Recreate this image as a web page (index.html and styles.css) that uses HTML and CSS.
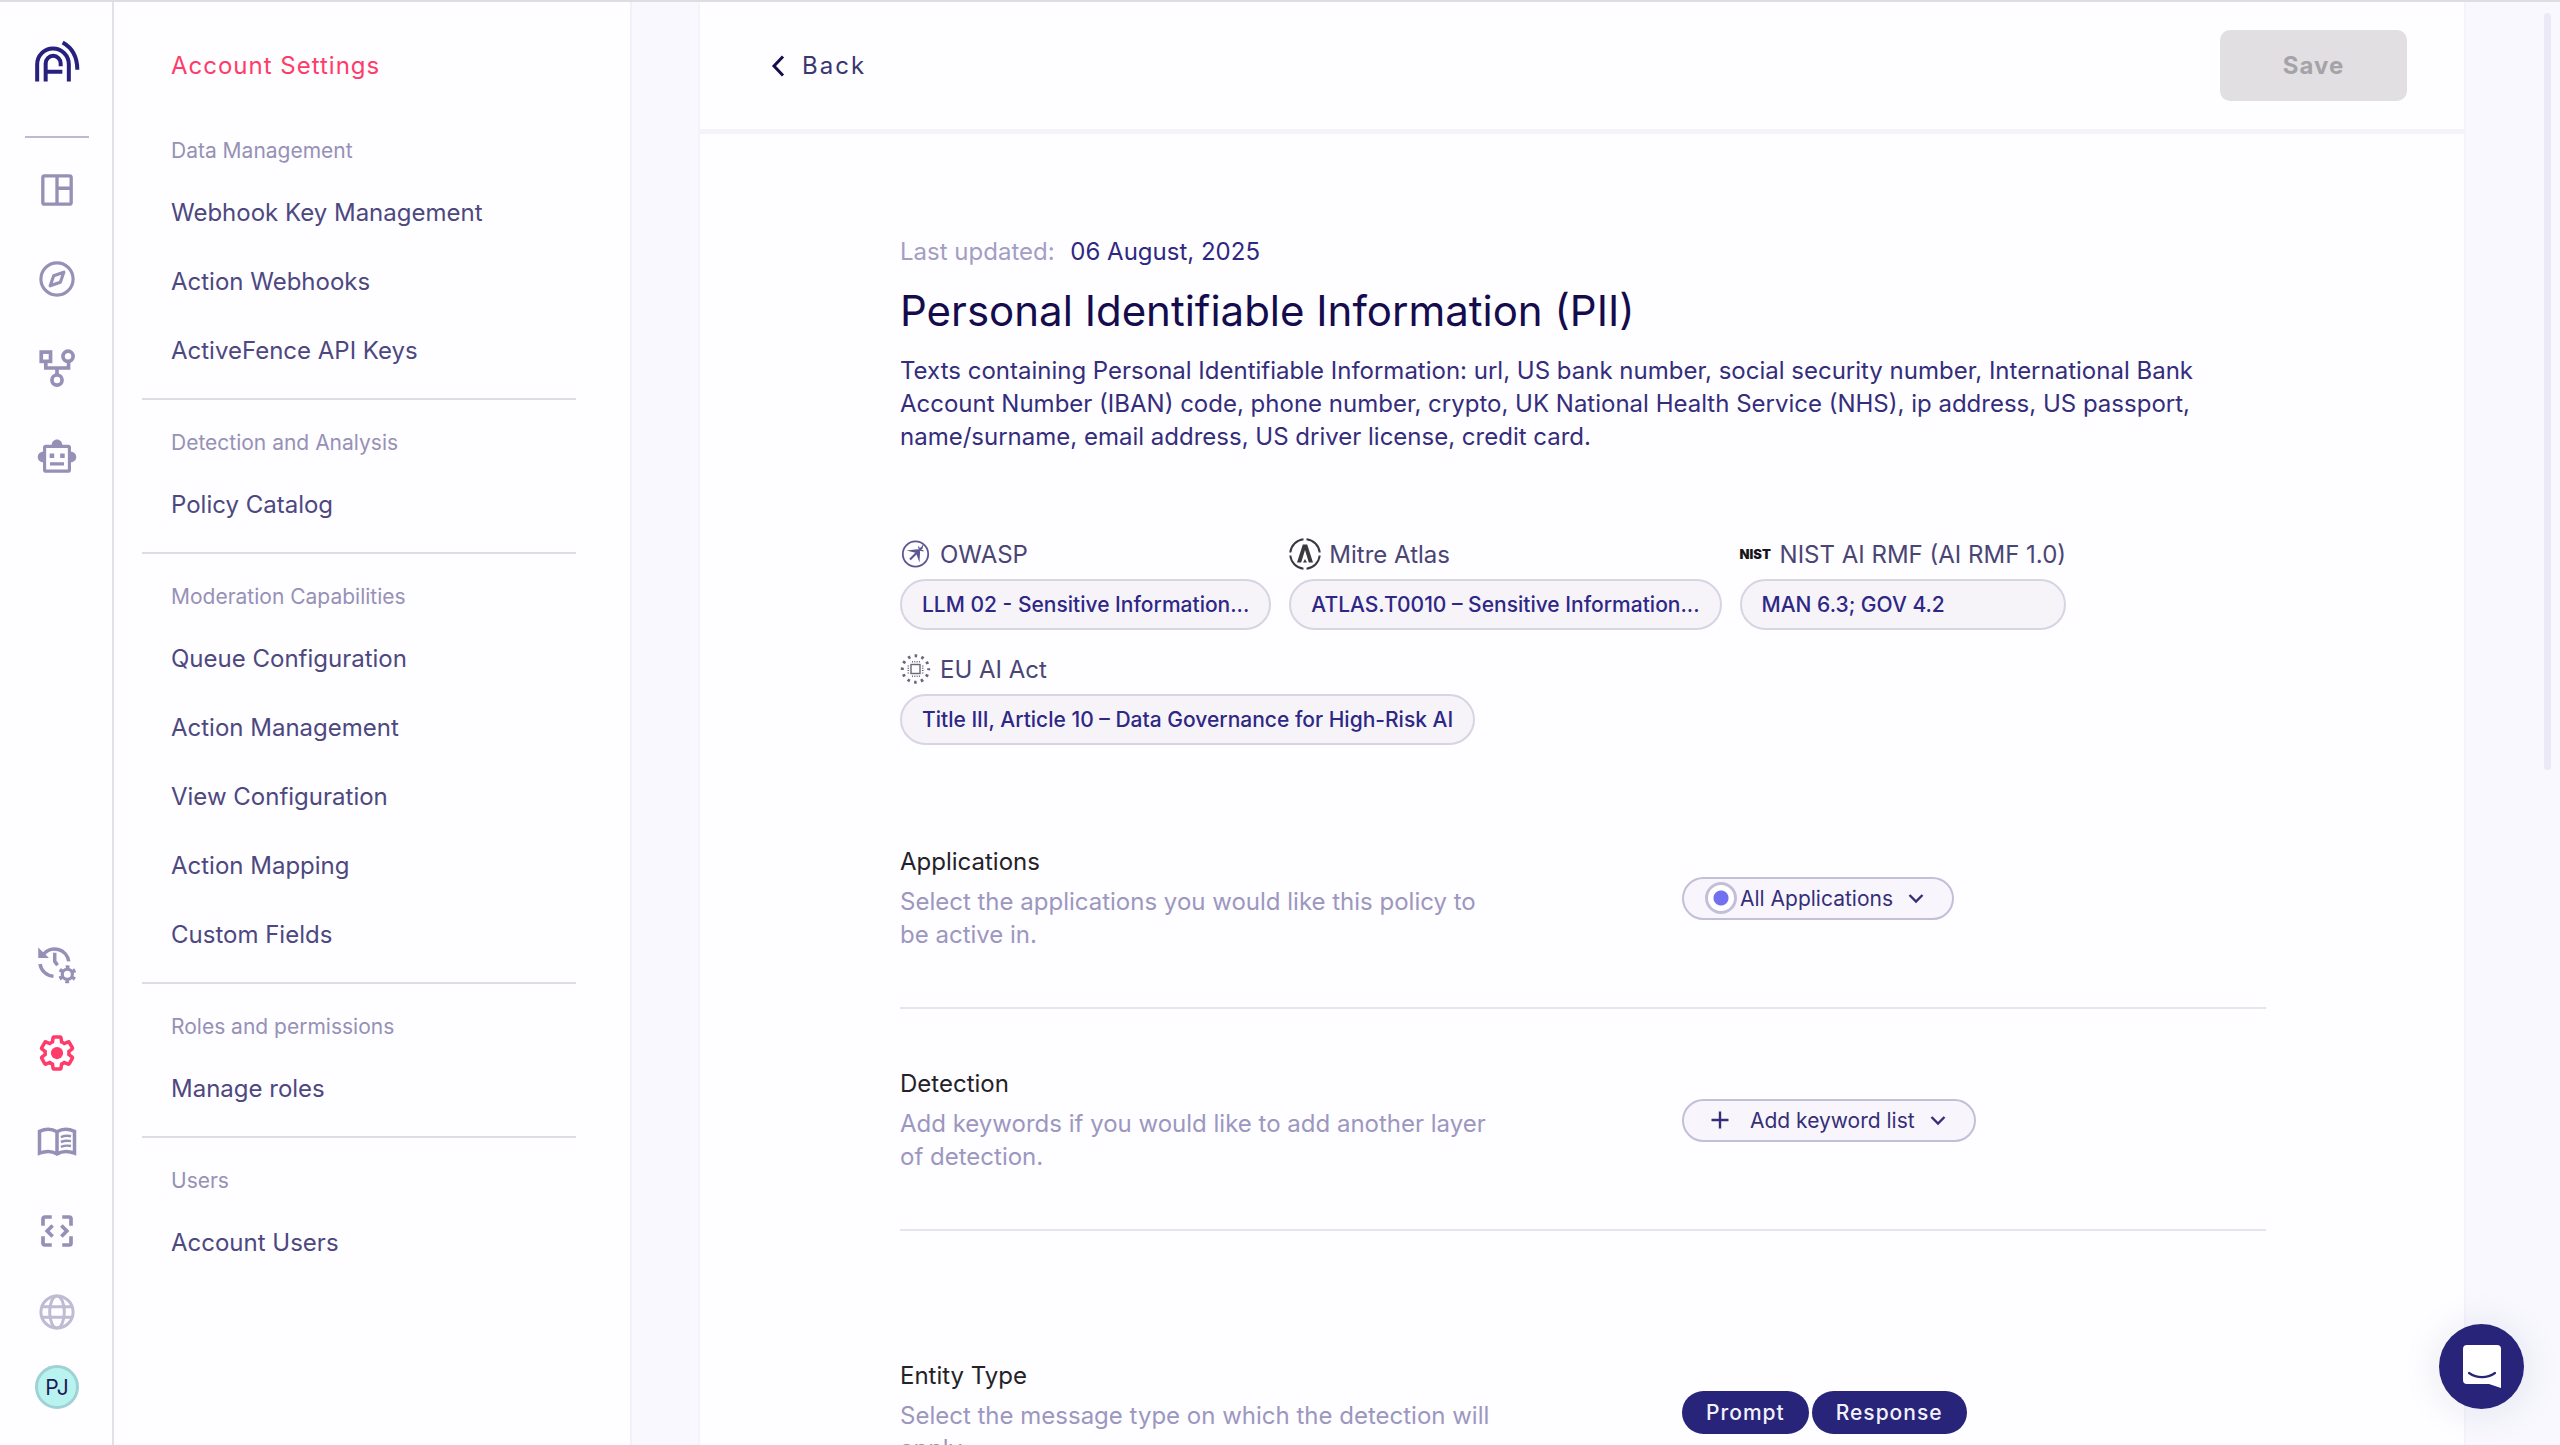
FILE: index.html
```html
<!DOCTYPE html>
<html lang="en">
  <head>
    <meta charset="UTF-8" />
    <title>Account Settings</title>
    <link rel="stylesheet" href="styles.css">
  </head>
  <body>
    <div class="app">
      <!-- icon rail -->
      <nav class="rail" aria-label="Main">
        <a href="#" class="logo" aria-label="Home">
          <svg viewBox="44 61 135 125" fill="none" stroke="currentColor" stroke-width="12">
            <path d="M50.500 185V134a47.500 48 0 0 1 95 0v51" />
            <path d="M76 185v-54a22.500 23 0 0 1 45 0v8M76 156h50" />
            <path d="M127 68c29 16 44 44 44 82" />
          </svg>
        </a>
        <div class="rail-line"></div>

        <div class="rail-group">
          <a href="#" class="rail-link" aria-label="Dashboard">
            <svg viewBox="0 0 24 24" fill="none" stroke="currentColor" stroke-width="1.900">
              <rect x="3.900" y="3.900" width="16.200" height="16.200" rx="1" />
              <path d="M12 4v16M12 11h8" />
            </svg>
          </a>
          <a href="#" class="rail-link" aria-label="Explore">
            <svg viewBox="0 0 24 24" fill="none" stroke="currentColor" stroke-width="1.800">
              <circle cx="12" cy="12" r="9.200" />
              <path d="M8.100 15.900l2-5.700 5.800-2.100-2 5.700z" stroke-linejoin="round" />
            </svg>
          </a>
          <a href="#" class="rail-link" aria-label="Workflows">
            <svg viewBox="0 0 24 24" fill="none" stroke="currentColor" stroke-width="2.100">
              <rect x="3" y="2.900" width="5.300" height="5.300" />
              <circle cx="18.300" cy="5.300" r="2.900" />
              <circle cx="12" cy="18.900" r="2.900" />
              <path d="M5.600 8.200V12h13V8.200M12 12v4" />
            </svg>
          </a>
          <a href="#" class="rail-link" aria-label="Agents">
            <svg viewBox="0 0 24 24" fill="currentColor">
              <path d="M20 9V6.500c0-.8-.7-1.500-1.500-1.500H15c0-1.660-1.340-3-3-3S9 3.340 9 5H5.500C4.700 5 4 5.700 4 6.500V9c-1.660 0-3 1.340-3 3s1.340 3 3 3v4.500c0 .8.7 1.500 1.500 1.500h13c.8 0 1.500-.7 1.500-1.500V15c1.660 0 3-1.340 3-3s-1.340-3-3-3zm-1.800 10.200H5.800V6.800h12.400v12.400zM7.800 10h2.600v2.600H7.800zM13.800 10h2.600v2.600h-2.600zM8 15h8v1.800H8z" />
            </svg>
          </a>
        </div>

        <div class="rail-group rail-group-bottom">
          <a href="#" class="rail-link" aria-label="History settings">
            <svg viewBox="0 0 24 24" fill="none" stroke="currentColor" stroke-width="2">
              <path d="M4.200 6.500A8.200 8.200 0 0 1 18.700 10.500M2.300 12a8.200 8.200 0 0 0 7.700 7" />
              <path d="M1.300 2.500v6.100h6.100z" fill="currentColor" stroke="none" />
              <path d="M10.700 5.500v5l1.600 2.200" />
              <circle cx="17.900" cy="17.900" r="2.900" stroke-width="1.800" />
              <circle cx="17.900" cy="17.900" r="4.300" stroke-width="1.700" stroke-dasharray="2.100 2.400" stroke-dashoffset="1" transform="rotate(30 17.900 17.900)" />
            </svg>
          </a>
          <a href="#" class="rail-link active" aria-label="Settings">
            <svg viewBox="0 0 24 24" fill="none" stroke="currentColor" stroke-width="2.200">
              <path transform="translate(1.100 1.100) scale(.91)" d="M19.430 12.980c.04-.32.07-.64.07-.98s-.03-.66-.07-.98l2.110-1.650c.19-.15.24-.42.12-.64l-2-3.460c-.12-.22-.39-.3-.61-.22l-2.490 1c-.52-.4-1.080-.73-1.690-.98l-.38-2.650C14.460 2.180 14.250 2 14 2h-4c-.25 0-.46.18-.49.42l-.38 2.650c-.61.25-1.170.59-1.690.98l-2.490-1c-.23-.09-.49 0-.61.22l-2 3.460c-.13.22-.07.49.12.64l2.110 1.650c-.04.32-.07.65-.07.98s.03.66.07.98l-2.110 1.650c-.19.15-.24.42-.12.64l2 3.460c.12.22.39.3.61.22l2.490-1c.52.4 1.080.73 1.690.98l.38 2.650c.03.24.24.42.49.42h4c.25 0 .46-.18.49-.42l.38-2.650c.61-.25 1.170-.59 1.690-.98l2.490 1c.23.09.49 0 .61-.22l2-3.460c.12-.22.07-.49-.12-.64z" />
              <circle cx="12" cy="12" r="3.500" fill="currentColor" stroke="none" />
            </svg>
          </a>
          <a href="#" class="rail-link" aria-label="Documentation">
            <svg viewBox="0 0 24 24" fill="none" stroke="currentColor" stroke-width="2">
              <path d="M12 18.800c-3-1.700-6.500-1.700-10-.4V5.900c3.500-1.600 7-1.600 10 .2 3-1.800 6.500-1.800 10-.2v12.500c-3.500-1.300-7-1.300-10 .4zM12 6v12.500" />
              <path d="M14.200 9.200c2-.8 3.800-.9 5.800-.5M14.200 12c2-.8 3.800-.9 5.800-.5M14.200 14.800c2-.8 3.800-.9 5.800-.5" stroke-width="1.400" />
            </svg>
          </a>
          <a href="#" class="rail-link" aria-label="Developers">
            <svg viewBox="0 0 24 24" fill="none" stroke="currentColor" stroke-width="2.100">
              <path d="M9 4H5c-.6 0-1 .4-1 1v4M15 4h4c.6 0 1 .4 1 1v4M9 20H5c-.6 0-1-.4-1-1v-4M15 20h4c.6 0 1-.4 1-1v-4" />
              <path d="M9.500 8.900L6.400 12l3.100 3.100M14.500 8.900l3.100 3.100-3.100 3.100" />
            </svg>
          </a>
        </div>

        <div class="rail-footer">
          <button class="globe" aria-label="Language">
            <svg viewBox="0 0 24 24" fill="none" stroke="currentColor" stroke-width="1.700">
              <circle cx="12" cy="12" r="9.200" />
              <ellipse cx="12" cy="12" rx="4.200" ry="9.200" />
              <path d="M3.500 9h17M3.500 15h17" />
            </svg>
          </button>
          <button class="avatar">PJ</button>
        </div>
      </nav>

      <!-- settings menu -->
      <aside class="menu">
        <h2 class="menu-title">Account Settings</h2>
        <section class="menu-group">
          <h3>Data Management</h3>
          <a href="#">Webhook Key Management</a>
          <a href="#">Action Webhooks</a>
          <a href="#">ActiveFence API Keys</a>
        </section>
        <section class="menu-group">
          <h3>Detection and Analysis</h3>
          <a href="#">Policy Catalog</a>
        </section>
        <section class="menu-group">
          <h3>Moderation Capabilities</h3>
          <a href="#">Queue Configuration</a>
          <a href="#">Action Management</a>
          <a href="#">View Configuration</a>
          <a href="#">Action Mapping</a>
          <a href="#">Custom Fields</a>
        </section>
        <section class="menu-group">
          <h3>Roles and permissions</h3>
          <a href="#">Manage roles</a>
        </section>
        <section class="menu-group">
          <h3>Users</h3>
          <a href="#">Account Users</a>
        </section>
      </aside>

      <main class="main">
        <div class="card">
          <header class="card-header">
            <a href="#" class="back">
              <svg viewBox="0 0 14 22" fill="none" stroke="currentColor" stroke-width="3">
                <path d="M12 1.500L3 11l9 9.500" />
              </svg>
              Back
            </a>
            <button class="save" disabled>Save</button>
          </header>

          <div class="content">
            <p class="updated"><span>Last updated:</span> 06 August, 2025</p>
            <h1>Personal Identifiable Information (PII)</h1>
            <p class="description">
              Texts containing Personal Identifiable Information: url, US bank
              number, social security number, International Bank Account Number
              (IBAN) code, phone number, crypto, UK National Health Service
              (NHS), ip address, US passport, name/surname, email address, US
              driver license, credit card.
            </p>

            <div class="frameworks">
              <div class="framework">
                <div class="framework-name">
                  <svg class="owasp" viewBox="0 0 32 32" fill="none" stroke="currentColor">
                    <circle cx="15.500" cy="16" r="12.700" stroke-width="1.800" />
                    <path d="M22 9.500L10 21.500" stroke-width="2.200" />
                    <path d="M6.500 12.500l11-1.200 2 1.500-3 2.200zM19.500 24.500l.6-11-1.600-1-2.200 3.500z" fill="currentColor" stroke="none" />
                    <path d="M18.500 8.500l1 3.500 4 .8M22.800 7.200l-1 3" stroke-width="1.200" />
                  </svg>
                  OWASP
                </div>
                <div class="pill">LLM 02 - Sensitive Information...</div>
              </div>
              <div class="framework">
                <div class="framework-name">
                  <svg class="atlas" viewBox="0 0 32 32" fill="none" stroke="currentColor">
                    <path d="M17.500 1.300a14.800 14.800 0 0 1 13.200 13.200M30.700 17.500a14.800 14.800 0 0 1-13.200 13.200M14.500 30.700A14.800 14.800 0 0 1 1.300 17.500M1.300 14.500A14.800 14.800 0 0 1 14.500 1.300" stroke-width="2" />
                    <path d="M13.800 6.500h4.400l5.800 18h-4.200L16 12l-3.800 12.500H8z" fill="currentColor" stroke="none" />
                    <path d="M16 21l2 3.500h-4z" fill="currentColor" stroke="none" />
                  </svg>
                  Mitre Atlas
                </div>
                <div class="pill">ATLAS.T0010 – Sensitive Information...</div>
              </div>
              <div class="framework">
                <div class="framework-name">
                  <span class="nist">NIST</span>
                  NIST AI RMF (AI RMF 1.0)
                </div>
                <div class="pill">MAN 6.3; GOV 4.2</div>
              </div>
              <div class="framework">
                <div class="framework-name">
                  <svg class="eu" viewBox="0 0 32 32" fill="none" stroke="currentColor">
                    <circle cx="15.500" cy="16" r="13.200" stroke-width="3" stroke-dasharray="2.600 4.310" stroke-dashoffset="1.300" />
                    <rect x="11" y="11.500" width="9" height="9" stroke-width="1.400" />
                    <path d="M12 8.800h8M12 23.200h8M8.300 12.500v8M22.700 12.500v8" stroke-width="1.600" stroke-dasharray="1 1.300" />
                  </svg>
                  EU AI Act
                </div>
                <div class="pill">Title III, Article 10 – Data Governance for High-Risk AI</div>
              </div>
            </div>

            <section class="setting">
              <div class="setting-text">
                <label class="setting-title" for="applications">Applications</label>
                <p>Select the applications you would like this policy to be active in.</p>
              </div>
              <div class="setting-control">
                <div class="dropdown dropdown-radio">
                  <input type="radio" checked aria-label="All applications" />
                  <select id="applications">
                    <option>All Applications</option>
                  </select>
                  <svg class="chevron" viewBox="0 0 20 20" fill="none" stroke="currentColor" stroke-width="2.400">
                    <path d="M3.500 7l6.500 6.500L16.500 7" />
                  </svg>
                </div>
              </div>
            </section>

            <section class="setting">
              <div class="setting-text">
                <label class="setting-title" for="keywords">Detection</label>
                <p>Add keywords if you would like to add another layer of detection.</p>
              </div>
              <div class="setting-control">
                <div class="dropdown dropdown-add">
                  <svg class="plus" viewBox="0 0 24 24" fill="none" stroke="currentColor" stroke-width="2.400">
                    <path d="M12 3.500v17M3.500 12h17" />
                  </svg>
                  <select id="keywords">
                    <option>Add keyword list</option>
                  </select>
                  <svg class="chevron" viewBox="0 0 20 20" fill="none" stroke="currentColor" stroke-width="2.400">
                    <path d="M3.500 7l6.500 6.500L16.500 7" />
                  </svg>
                </div>
              </div>
            </section>

            <section class="setting setting-entity">
              <div class="setting-text">
                <h2 class="setting-title">Entity Type</h2>
                <p>Select the message type on which the detection will apply.</p>
              </div>
              <div class="setting-control">
                <button class="toggle" aria-pressed="true">Prompt</button>
                <button class="toggle" aria-pressed="true">Response</button>
              </div>
            </section>
          </div>
        </div>
        <div class="scroll-thumb"></div>
      </main>
    </div>

    <button class="chat" aria-label="Open chat">
      <svg viewBox="0 0 38 44">
        <path d="M4 0h30a4 4 0 0 1 4 4v39l-12-4H4a4 4 0 0 1-4-4V4a4 4 0 0 1 4-4z" fill="#fff" />
        <path d="M6 28c8 5.500 18 5.500 26 0" fill="none" stroke="#27247a" stroke-width="2.200" stroke-linecap="round" />
      </svg>
    </button>
  </body>
</html>
```

FILE: styles.css
```css
* {
  box-sizing: border-box;
}

body {
  margin: 0;
  font-family: Inter, "Liberation Sans", sans-serif;
  font-size: 24px;
  line-height: 33px;
  color: #342d7c;
  background: #fefdff;
}

h1,
h2,
h3,
p {
  margin: 0;
  font-weight: 400;
}

a {
  color: inherit;
  text-decoration: none;
}

button,
select {
  font-family: inherit;
  border: none;
  cursor: pointer;
}

svg {
  display: block;
  flex-shrink: 0;
}

.app {
  display: flex;
  height: 100vh;
  overflow: hidden;
  border-top: 2px solid #dfdde2;
}

/* icon rail */
.rail {
  display: flex;
  flex-direction: column;
  align-items: center;
  flex-shrink: 0;
  width: 114px;
  padding: 38px 0 36px 2px;
  border-right: 2px solid #e3e1e8;
}

.logo {
  color: #27207e;
}

.logo svg {
  width: 45px;
  height: 42px;
}

.rail-line {
  width: 64px;
  height: 2px;
  margin: 54px 0 31px;
  background: #bdb9d1;
}

.rail-group {
  display: flex;
  flex-direction: column;
  gap: 47px;
}

.rail-group-bottom {
  margin-top: auto;
}

.rail-link {
  color: #9590b5;
}

.rail-link.active {
  color: #ff3b69;
}

.rail-link svg,
.globe svg {
  width: 42px;
  height: 42px;
}

.rail-footer {
  display: flex;
  flex-direction: column;
  align-items: center;
  gap: 32px;
  margin-top: 39px;
}

.globe {
  padding: 0;
  background: none;
  color: #bfbbd3;
}

.avatar {
  width: 44px;
  height: 44px;
  padding: 0;
  border: 3px solid #9fd2d4;
  border-radius: 50%;
  background: #b9f3f0;
  color: #1f1a55;
  font-size: 21px;
}

/* settings menu */
.menu {
  flex-shrink: 0;
  width: 518px;
  padding: 47px 54px 0 28px;
  border-right: 2px solid #f2f1f9;
}

.menu-title {
  padding-left: 29px;
  margin-bottom: 26px;
  font-size: 24px;
  letter-spacing: 1px;
  color: #ff3b69;
}

.menu-group {
  padding: 31px 0 13px 29px;
  border-bottom: 2px solid #dfdde4;
}

.menu-group:last-child {
  border-bottom: none;
}

.menu-group h3 {
  margin-bottom: 15px;
  font-size: 21px;
  line-height: 24px;
  color: #9691b6;
}

.menu-group a {
  display: block;
  line-height: 69px;
  color: #4d4880;
}

/* main column */
.main {
  position: relative;
  flex: 1;
  min-width: 0;
  padding: 0 96px 0 68px;
  background: #f8f8fe;
}

.card {
  min-height: 100%;
  background: #fefdff;
  box-shadow: 0 0 3px #e9e8f3;
}

.card-header {
  display: flex;
  align-items: center;
  justify-content: space-between;
  height: 132px;
  padding: 0 57px 0 71px;
  border-bottom: 5px solid #f4f3f9;
}

.back {
  display: flex;
  align-items: center;
  gap: 17px;
  letter-spacing: 2px;
  color: #3b3570;
}

.back svg {
  width: 14px;
  height: 22px;
  color: #160e4c;
}

.save {
  width: 187px;
  height: 71px;
  border-radius: 10px;
  background: #e1dfe2;
  color: #a5a3a7;
  font-size: 24px;
  font-weight: 700;
  letter-spacing: 1px;
  cursor: default;
}

.content {
  padding: 101px 198px 0 200px;
}

.updated {
  color: #2f2883;
}

.updated span {
  margin-right: 9px;
  color: #a39ec4;
}

h1 {
  margin: 18px 0;
  font-size: 42px;
  line-height: 50px;
  color: #150c4d;
}

.frameworks {
  display: flex;
  flex-wrap: wrap;
  gap: 22px 18px;
  margin-top: 84px;
}

.framework {
  display: flex;
  flex-direction: column;
  gap: 8px;
}

.framework-name {
  display: flex;
  align-items: center;
  gap: 8px;
  height: 34px;
  color: #4a4575;
}

.framework-name svg {
  width: 32px;
  height: 32px;
}

.owasp {
  color: #5b568f;
}

.atlas {
  color: #3a393f;
}

.eu {
  color: #6a6775;
}

.nist {
  width: 32px;
  font-size: 13px;
  font-weight: 900;
  color: #16151a;
}

.pill {
  padding: 7px 20px;
  border: 2px solid #d7d4e3;
  border-radius: 26px;
  background: #f6f4f9;
  color: #2f2786;
  font-size: 21px;
  font-weight: 500;
}

/* settings rows */
.setting {
  display: grid;
  grid-template-columns: minmax(0, 782px) 1fr;
  align-items: center;
  padding: 58px 0 56px;
  border-bottom: 2px solid #e6e4ec;
}

.frameworks + .setting {
  margin-top: 42px;
}

.setting-entity {
  margin-top: 70px;
  border-bottom: none;
}

.setting-title {
  display: block;
  margin-bottom: 7px;
  font-size: 24px;
  color: #242229;
}

.setting-text p {
  max-width: 606px;
  color: #9c97bf;
}

.setting-control {
  display: flex;
  gap: 3px;
}

.dropdown {
  display: flex;
  align-items: center;
  height: 43px;
  border: 2px solid #c3bfd8;
  border-radius: 22px;
  background: #f8f6fc;
  color: #352e78;
}

.dropdown-radio {
  gap: 3px;
  padding: 0 26px 0 21px;
}

.dropdown-add {
  gap: 18px;
  padding: 0 26px 0 24px;
}

.dropdown select {
  appearance: none;
  padding: 0;
  background: none;
  color: inherit;
  font-size: 21px;
}

.dropdown input {
  appearance: none;
  width: 32px;
  height: 32px;
  margin: 0;
  border: 3px solid #c3bfd8;
  border-radius: 50%;
  background: radial-gradient(circle, #7170f0 7px, #fff 8px);
}

.chevron {
  width: 20px;
  height: 20px;
}

.dropdown-radio .chevron {
  margin-left: 10px;
}

.dropdown-add .chevron {
  margin-left: -5px;
}

.plus {
  width: 24px;
  height: 24px;
}

.toggle {
  height: 43px;
  padding: 0 24px;
  border-radius: 22px;
  background: #27247a;
  color: #f3f1fa;
  font-size: 21px;
  font-weight: 500;
  letter-spacing: 1px;
}

.scroll-thumb {
  position: absolute;
  top: 11px;
  right: 9px;
  width: 7px;
  height: 757px;
  border-radius: 4px;
  background: #ebe9f6;
}

.chat {
  position: fixed;
  right: 36px;
  bottom: 36px;
  display: flex;
  align-items: center;
  justify-content: center;
  width: 85px;
  height: 85px;
  padding: 0;
  border-radius: 50%;
  background: #27247a;
  box-shadow: 0 2px 40px rgba(30, 25, 80, 0.1);
}

.chat svg {
  width: 38px;
  height: 44px;
}
```
